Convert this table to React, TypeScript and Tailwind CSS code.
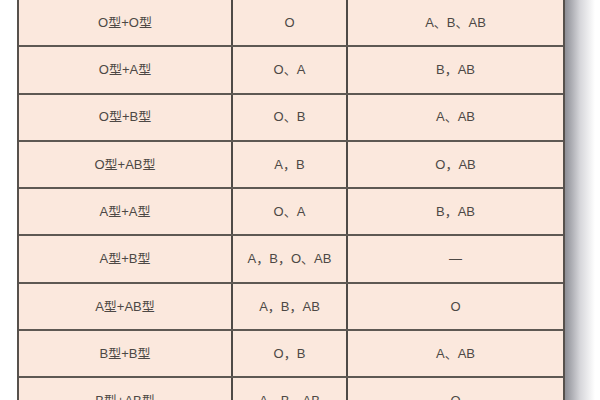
import React from 'react'

const rows: [string, string, string][] = [
  ['O型+O型', 'O', 'A、B、AB'],
  ['O型+A型', 'O、A', 'B，AB'],
  ['O型+B型', 'O、B', 'A、AB'],
  ['O型+AB型', 'A，B', 'O，AB'],
  ['A型+A型', 'O、A', 'B，AB'],
  ['A型+B型', 'A，B，O、AB', '—'],
  ['A型+AB型', 'A，B，AB', 'O'],
  ['B型+B型', 'O，B', 'A、AB'],
  ['B型+AB型', 'A，B，AB', 'O'],
]

export default function App() {
  return (
    <div
      className="w-[600px] h-[400px] overflow-hidden bg-white flex"
      style={{ fontFamily: '"Liberation Sans", "Noto Sans CJK SC", sans-serif' }}
    >
      <div className="w-[17px] shrink-0" />
      <div className="flex shrink-0 -mt-[2px]">
        <div className="w-[548px] border-x-2 border-t-2 border-[#57514c] bg-[#fbe8dd] text-[13px] text-[#4d4845]">
          {rows.map((r, i) => (
            <div key={i} className="grid grid-cols-[214px_115px_215px] h-[47.3px] border-b-2 border-[#5e5853]">
              <div className="flex items-center justify-center border-r-2 border-[#4f4a46]">{r[0]}</div>
              <div className="flex items-center justify-center border-r-2 border-[#4f4a46]">{r[1]}</div>
              <div className="flex items-center justify-center">{r[2]}</div>
            </div>
          ))}
        </div>
        <div className="w-[30px] bg-gradient-to-r from-[#8e8f96] via-[#d6d6da] to-white" />
      </div>
    </div>
  )
}
